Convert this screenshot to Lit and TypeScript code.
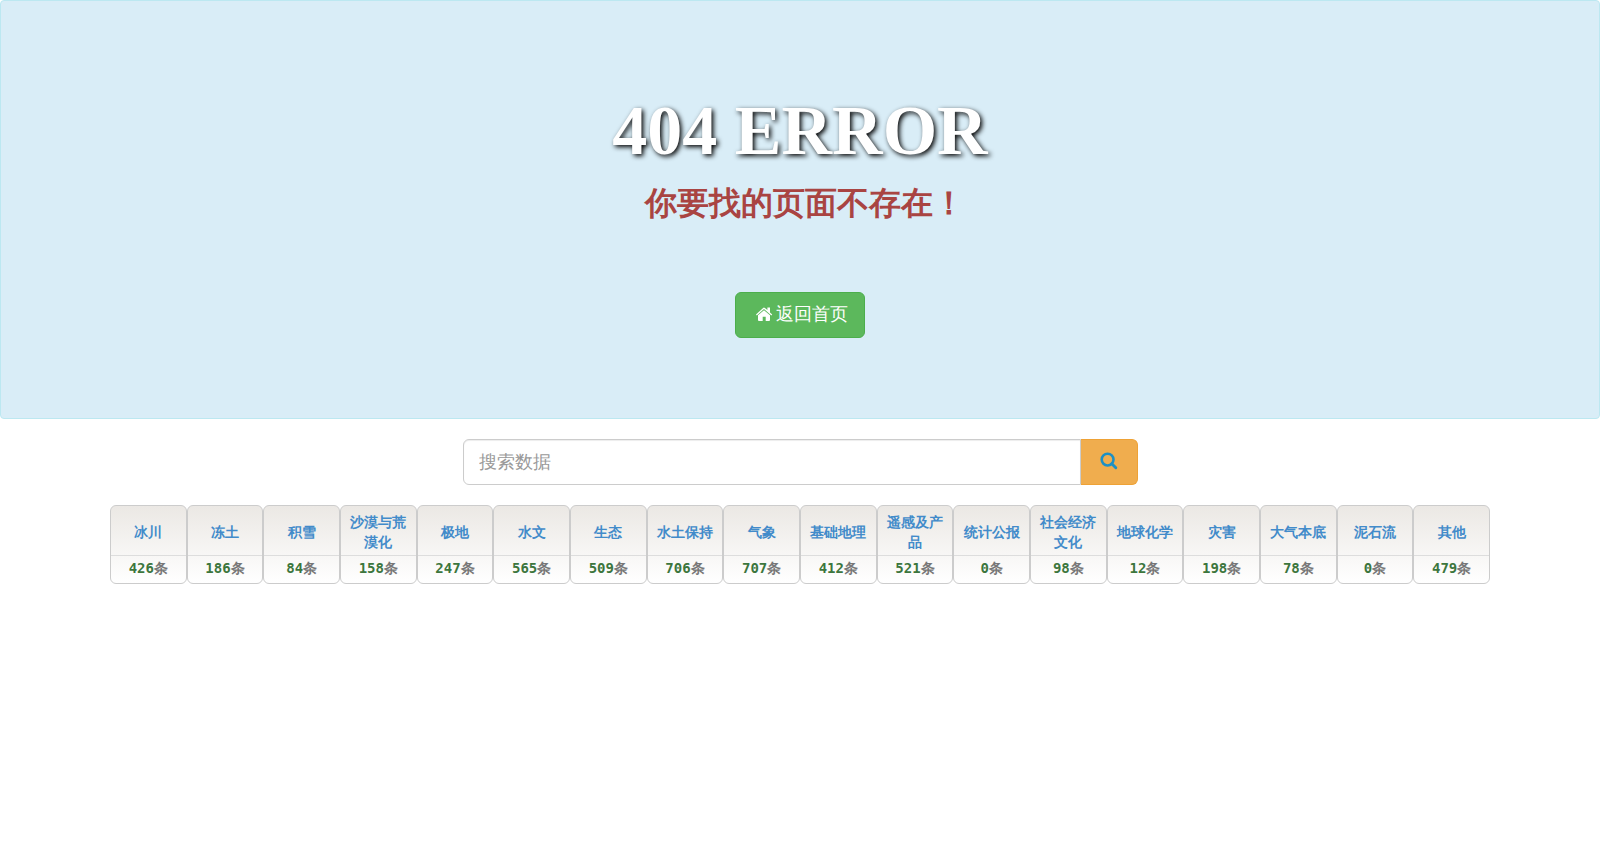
import { LitElement, html, css } from "lit";
import { customElement } from "lit/decorators.js";

interface Category {
  name: string;
  count: number;
}

const CATEGORIES: Category[] = [
  { name: "冰川", count: 426 },
  { name: "冻土", count: 186 },
  { name: "积雪", count: 84 },
  { name: "沙漠与荒漠化", count: 158 },
  { name: "极地", count: 247 },
  { name: "水文", count: 565 },
  { name: "生态", count: 509 },
  { name: "水土保持", count: 706 },
  { name: "气象", count: 707 },
  { name: "基础地理", count: 412 },
  { name: "遥感及产品", count: 521 },
  { name: "统计公报", count: 0 },
  { name: "社会经济文化", count: 98 },
  { name: "地球化学", count: 12 },
  { name: "灾害", count: 198 },
  { name: "大气本底", count: 78 },
  { name: "泥石流", count: 0 },
  { name: "其他", count: 479 },
];

@customElement("category-card")
export class CategoryCard extends LitElement {
  static properties = {
    name: { type: String },
    count: { type: Number },
  };

  declare name: string;
  declare count: number;

  static styles = css`
    :host {
      display: flex;
      flex-direction: column;
      box-sizing: border-box;
      min-width: 0;
      border: 1px solid #ccc;
      border-radius: 6px;
      background: linear-gradient(#ebe8e4, #fff);
      font-weight: 700;
      font-size: 14px;
      line-height: 20px;
      text-align: center;
    }
    .name {
      flex: 1;
      display: flex;
      align-items: center;
      justify-content: center;
      padding: 6px 8px 3px;
      border-bottom: 1px solid #ddd;
      color: #428bca;
      text-decoration: none;
    }
    .count {
      padding: 2px 0 5px;
      color: #777;
    }
    .number {
      color: #3c763d;
    }
  `;

  render() {
    return html`
      <a class="name" href="#">${this.name}</a>
      <div class="count"><span class="number">${this.count}</span>条</div>
    `;
  }
}

@customElement("app-root")
export class AppRoot extends LitElement {
  static styles = css`
    :host {
      display: block;
      font-family: "DejaVu Sans Mono", monospace;
      font-size: 14px;
      line-height: 20px;
      color: #333;
    }
    .banner {
      display: flex;
      flex-direction: column;
      align-items: center;
      padding: 91px 15px 80px;
      border: 1px solid #bce8f1;
      border-radius: 4px;
      background: #d9edf7;
      text-align: center;
    }
    .title {
      margin: 0;
      color: #fff;
      font: bold 70px/77px "Liberation Serif", serif;
      text-shadow: 2px 2px 5px #000;
    }
    .message {
      margin: 16px 0 0;
      padding-left: 10px;
      color: #a94442;
      font-size: 32px;
      line-height: 36px;
      font-weight: 700;
    }
    .home {
      display: flex;
      align-items: center;
      gap: 3px;
      box-sizing: border-box;
      height: 46px;
      margin-top: 71px;
      padding: 0 16px 2px 20px;
      border: 1px solid #4cae4c;
      border-radius: 6px;
      background: #5cb85c;
      color: #fff;
      font-size: 18px;
      line-height: 24px;
      text-decoration: none;
    }
    .search {
      display: flex;
      box-sizing: border-box;
      width: 50%;
      max-width: 675px;
      height: 46px;
      margin: 20px auto;
    }
    .query {
      flex: 1;
      min-width: 0;
      box-sizing: border-box;
      margin: 0;
      padding: 10px 15px;
      border: 1px solid #ccc;
      border-radius: 6px 0 0 6px;
      background: #fff;
      box-shadow: inset 0 1px 1px rgba(0, 0, 0, 0.075);
      color: #555;
      font-family: inherit;
      font-size: 18px;
      line-height: 24px;
    }
    .query::placeholder {
      color: #999;
    }
    .submit {
      display: flex;
      align-items: center;
      justify-content: center;
      width: 57px;
      padding: 0 0 2px;
      border: 1px solid #eea236;
      border-left-width: 0;
      border-radius: 0 6px 6px 0;
      background: #f0ad4e;
      color: #1e90c4;
      cursor: pointer;
    }
    .categories {
      display: grid;
      grid-template-columns: repeat(18, minmax(0, 1fr));
      max-width: 1380px;
      margin: 0 auto;
    }
  `;

  render() {
    return html`
      <header class="banner">
        <h1 class="title">404 ERROR</h1>
        <h2 class="message">你要找的页面不存在！</h2>
        <a class="home" href="#">
          <svg width="17" height="14" viewBox="0 0 17 14" fill="currentColor" aria-hidden="true">
            <path d="M8 3.2 14 8.3V13q0 1-1 1H9.7V9.8H6.7V14H3q-1 0-1-1V8.3Z" />
            <path d="M0 7.4 7.1.9q.9-.8 1.8 0L11.4 3.1V.6H14v4.9l2.2 1.9-.8 1L8 1.9.8 8.4Z" />
          </svg>
          <span>返回首页</span>
        </a>
      </header>
      <main>
        <form class="search" role="search">
          <input class="query" type="text" placeholder="搜索数据" aria-label="搜索数据" />
          <button class="submit" type="button" aria-label="搜索">
            <svg width="18" height="18" viewBox="0 0 18 18" fill="none" stroke="currentColor" aria-hidden="true">
              <circle cx="7.6" cy="7.6" r="5.9" stroke-width="2.6" />
              <path d="m11.8 11.8 4 4" stroke-width="2.9" stroke-linecap="round" />
            </svg>
          </button>
        </form>
        <nav class="categories">
          ${CATEGORIES.map(
            (item) => html`<category-card .name=${item.name} .count=${item.count}></category-card>`
          )}
        </nav>
      </main>
    `;
  }
}
